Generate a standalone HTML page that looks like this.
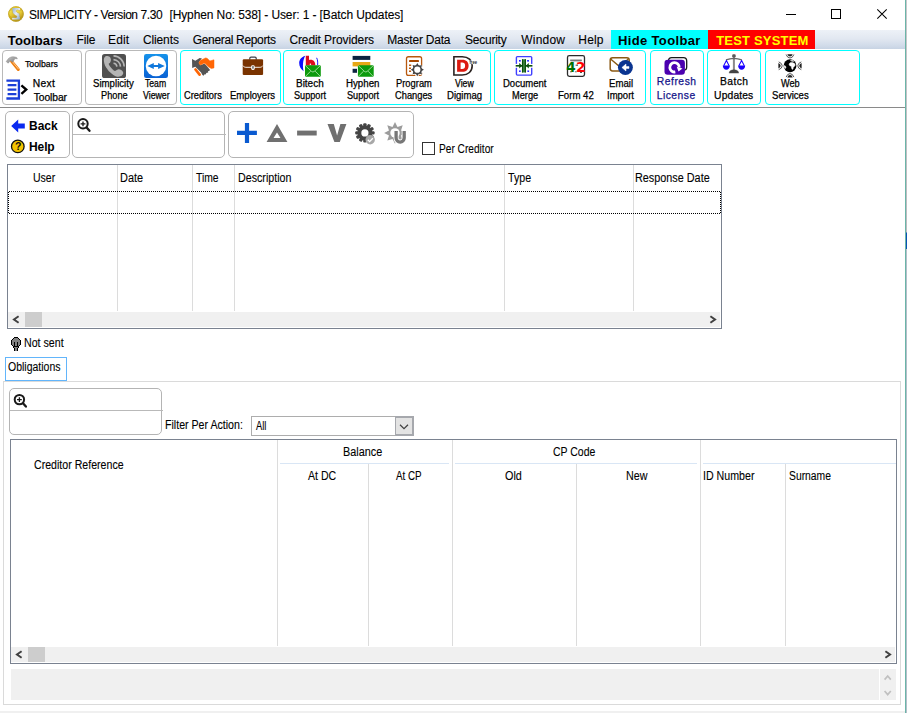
<!DOCTYPE html>
<html><head><meta charset="utf-8"><title>SIMPLICITY</title>
<style>
*{box-sizing:border-box;margin:0;padding:0}
html,body{width:907px;height:713px;overflow:hidden;background:#fff}
body{position:relative;font-family:"Liberation Sans",sans-serif;font-size:11px;color:#000}
.a,.t,svg{position:absolute}
.t{white-space:nowrap;line-height:normal;transform-origin:0 0;-webkit-text-stroke:.25px currentColor}
.b{font-weight:bold;-webkit-text-stroke:0}
.n{-webkit-text-stroke:.1px currentColor}
.g{position:absolute;top:50px;height:55px;border:1px solid #b9b9b9;border-radius:4px}
.g.c{border-color:#00ffff}
.r{position:absolute;border:1px solid #b4b4b4;border-radius:5px}
.grid{position:absolute;border:1px solid #7a8290;background:#fff}
.v{position:absolute;width:1px;background:#dcdcdc}
.h{position:absolute;height:1px;background:#d9e6f5}
.sb{position:absolute;background:#f0f0f0}
.th{position:absolute;background:#cdcdcd}
</style></head><body>

<svg style="left:4px;top:2px" width="24" height="24" viewBox="4 2 24 24">
 <defs>
  <radialGradient id="tg" cx="40%" cy="35%" r="70%"><stop offset="0" stop-color="#f6e650"/><stop offset=".6" stop-color="#d9b824"/><stop offset="1" stop-color="#a08418"/></radialGradient>
  <linearGradient id="ts" x1="0" y1="0" x2="1" y2="1"><stop offset="0" stop-color="#8fabcd"/><stop offset=".5" stop-color="#e6edf5"/><stop offset="1" stop-color="#85a3c7"/></linearGradient>
  <linearGradient id="ta" x1="0" y1="0" x2="1" y2="1"><stop offset="0" stop-color="#f8ec5a"/><stop offset=".55" stop-color="#e2c432"/><stop offset="1" stop-color="#b08c18"/></linearGradient>
 </defs>
 <circle cx="15.950" cy="13.950" r="7.700" fill="url(#tg)"/>
 <path d="M12.42 8.06 20.16 8.06 20.16 12.10 19.82 19.51 12.08 19.51 12.08 16.81 12.42 12.10Z" fill="url(#ts)"/>
 <path d="M9.05 11.09 11.91 9.58 12.59 12.77 14.10 14.46 16.96 16.31 16.29 17.82 12.08 17.66 9.89 16.14 8.71 13.78Z" fill="url(#ta)" stroke="#b5941e" stroke-width=".35"/>
 <path d="M15.95 10.92 17.47 9.91 19.82 10.59 21.51 9.74 23.02 12.10 22.86 15.47 20.84 17.82 19.82 16.81 19.66 13.78 16.96 12.27Z" fill="url(#ta)" stroke="#b5941e" stroke-width=".35"/>
 <circle cx="15.950" cy="13.950" r="7.300" fill="none" stroke="#c8a822" stroke-width=".9" opacity=".7"/>
</svg>

<div class="t n" style="left:29.06px;top:8px;font-size:12px;letter-spacing:-0.429px;">SIMPLICITY - Version 7.30</div>
<div class="t n" style="left:169.44px;top:8px;font-size:12px;letter-spacing:-0.111px;">[Hyphen No: 538] - User: 1 - [Batch Updates]</div>
<svg style="left:780px;top:4px" width="120" height="22" viewBox="0 0 120 22">
 <path d="M6 10.5H16" stroke="#000" stroke-width="1" fill="none"/>
 <rect x="51.5" y="5.5" width="9" height="9" stroke="#000" stroke-width="1" fill="none"/>
 <path d="M97.3 5.3L106.7 14.7M106.7 5.3L97.3 14.7" stroke="#000" stroke-width="1.05" fill="none"/>
</svg>
<div class="a" style="left:0;top:30px;width:905px;height:19px;background:linear-gradient(#edf1f7 0,#e2e8f1 45%,#d2dcea 80%,#c7d3e3 100%)"></div>
<div class="a" style="left:611px;top:30px;width:97px;height:19px;background:#00ffff"></div>
<div class="a" style="left:708px;top:30px;width:107px;height:19px;background:#ff0000"></div>
<div class="t b" style="left:7.85px;top:33px;font-size:13px;letter-spacing:0.112px;">Toolbars</div>
<div class="t n" style="left:76.62px;top:33px;font-size:12px;letter-spacing:-0.139px;">File</div>
<div class="t n" style="left:108.02px;top:33px;font-size:12px;letter-spacing:0.132px;">Edit</div>
<div class="t n" style="left:142.89px;top:33px;font-size:12px;letter-spacing:-0.106px;">Clients</div>
<div class="t n" style="left:192.70px;top:33px;font-size:12px;letter-spacing:-0.329px;">General Reports</div>
<div class="t n" style="left:289.39px;top:33px;font-size:12px;letter-spacing:-0.086px;">Credit Providers</div>
<div class="t n" style="left:387.32px;top:33px;font-size:12px;letter-spacing:-0.217px;">Master Data</div>
<div class="t n" style="left:464.96px;top:33px;font-size:12px;letter-spacing:-0.226px;">Security</div>
<div class="t n" style="left:521.25px;top:33px;font-size:12px;letter-spacing:0.209px;">Window</div>
<div class="t n" style="left:578.32px;top:33px;font-size:12px;letter-spacing:0.170px;">Help</div>
<div class="t b" style="left:617.93px;top:33px;font-size:13px;letter-spacing:0.365px;">Hide Toolbar</div>
<div class="t b" style="left:716.15px;top:33px;font-size:13px;letter-spacing:0.193px;color:#ffff00;">TEST SYSTEM</div>
<div class="g" style="left:2px;width:80px"></div>
<div class="g" style="left:85px;width:92px"></div>
<div class="g c" style="left:180px;width:101px"></div>
<div class="g c" style="left:283px;width:208px"></div>
<div class="g c" style="left:494px;width:152px"></div>
<div class="g c" style="left:650px;width:54px"></div>
<div class="g c" style="left:707px;width:54px"></div>
<div class="g c" style="left:765px;width:95px"></div>
<svg style="left:0;top:50px" width="905" height="56" viewBox="0 50 905 56">
 <defs>
  <linearGradient id="tv" x1="0" y1="0" x2="0" y2="1"><stop offset="0" stop-color="#1692ea"/><stop offset="1" stop-color="#0a62d4"/></linearGradient>
  <linearGradient id="hm" x1="0" y1="0" x2="1" y2="1"><stop offset="0" stop-color="#cfcfcf"/><stop offset="1" stop-color="#6e6e6e"/></linearGradient>
  <g id="env"><rect x="0" y="0" width="15.8" height="11.6" rx="1.2" fill="#0c9a0c"/><path d="M0.500 0.500L6.700 6.300Q7.900 7.300 9.100 6.300L15.300 0.500M0.600 11.100L5.600 6M15.200 11.100L10.200 6" fill="none" stroke="#c4ecbc" stroke-width=".75"/></g>
 </defs>
 <!-- hammer -->
 <path d="M11.600 61.400L18.300 69.500" stroke="#ee7f12" stroke-width="3" stroke-linecap="round"/>
 <path d="M12.200 61.400L18.300 68.800" stroke="#ffc98a" stroke-width="1" stroke-linecap="round"/>
 <path d="M6.2 61.6L8.4 58.6C10.4 56.6 13.6 56.2 16.6 57.4L17.4 58.8L15 58.6L12.6 62.2L10.4 60.6L8.2 63.2Z" fill="url(#hm)" stroke="#7a7a7a" stroke-width=".4"/>
 <!-- next toolbar -->
 <path d="M6.4 80.7H18.9V98.5H6.4" fill="none" stroke="#1a3fd8" stroke-width="2.3"/>
 <path d="M7.6 85.2H16.4M7.6 89.7H16.4M7.6 94.1H16.4" stroke="#1a3fd8" stroke-width="2.2"/>
 <path d="M21.4 85.4L26.200 89.600L21.4 93.800" fill="none" stroke="#000" stroke-width="2.4"/>
 <!-- phone -->
 <rect x="102" y="54" width="24" height="24" rx="2.600" fill="#505050"/>
 <path d="M106.68 56.12C107.52 56.16 109.11 56.48 109.82 57.11C110.53 57.73 110.87 58.94 110.92 59.86C110.97 60.77 110.50 61.95 110.13 62.60C109.77 63.26 108.84 63.29 108.72 63.78C108.60 64.27 108.92 64.77 109.43 65.55C109.94 66.34 110.96 67.63 111.78 68.50C112.60 69.37 113.62 70.46 114.34 70.77C115.06 71.09 115.42 70.63 116.10 70.38C116.79 70.13 117.61 69.35 118.46 69.28C119.31 69.22 120.42 69.47 121.21 69.99C122.00 70.51 122.94 71.63 123.17 72.42C123.40 73.22 123.04 74.13 122.58 74.78C122.13 75.44 121.31 76.04 120.42 76.35C119.54 76.67 118.39 76.85 117.28 76.67C116.17 76.48 114.99 76.01 113.75 75.25C112.50 74.49 111.06 73.37 109.82 72.11C108.58 70.85 107.20 69.16 106.28 67.71C105.37 66.26 104.73 64.77 104.32 63.39C103.91 62.02 103.77 60.54 103.85 59.46C103.93 58.38 104.32 57.47 104.79 56.91C105.26 56.35 105.84 56.09 106.68 56.12Z" fill="#b5b5b5"/>
 <path d="M113.50 63.20A3.7 3.7 0 0 1 116.90 66.60M113.50 59.60A7.3 7.3 0 0 1 120.50 66.60M113.50 55.90A11 11 0 0 1 124.20 66.60" fill="none" stroke="#b5b5b5" stroke-width="1.600"/>
 <!-- teamviewer -->
 <rect x="144" y="54" width="24" height="24" rx="2.200" fill="url(#tv)"/>
 <circle cx="156" cy="66" r="10.250" fill="#fff"/>
 <path d="M147.300 66l6.500-3v1.950h4.300v-1.950l6.700 3l-6.700 3v-1.950h-4.300v1.950z" fill="#0f78dc"/>
 <!-- handshake -->
 <path d="M192.0 59.1 195.3 60.7 199.7 58.0 202.0 58.4 200.0 60.6 198.8 62.7 200.4 65.3 204.0 63.8 205.5 64.6 209.9 69.7 209.3 71.0 208.1 71.1 208.2 72.6 206.2 73.0 206.0 74.2 204.2 74.4 203.7 75.7 202.4 75.0 201.1 72.6 195.3 66.8 192.2 67.9Z" fill="#555"/>
 <path d="M198.9 62.6 200.2 60.6 205.5 57.9 207.1 58.3 209.9 60.9 214.0 59.8 214.0 67.9 211.3 68.5 208.4 66.8 205.1 63.6 203.7 63.3 200.8 64.9 199.4 64.3Z" fill="#ff6605" stroke="#ff6605" stroke-width=".5" stroke-linejoin="round"/>
 <path d="M195.5 69.5L199.6 74.6" stroke="#ff6605" stroke-width="2.700" stroke-linecap="round"/>
 <!-- briefcase -->
 <path d="M249.800 59.800v-1.500c0-.8.500-1.200 1.200-1.200h4c.7 0 1.200.4 1.200 1.200v1.500" fill="none" stroke="#3a3f4a" stroke-width="1.200"/>
 <rect x="242.700" y="59.300" width="20.400" height="15.700" rx="1.100" fill="#7a3300"/>
 <path d="M242.700 65.500c1 1.300 2 1.800 3.200 1.800h14c1.200 0 2.200-.5 3.200-1.800" fill="none" stroke="#fff" stroke-width=".9"/>
 <rect x="251.200" y="65.200" width="3.500" height="4.700" rx="1.300" fill="#fff"/>
 <rect x="252.100" y="66.100" width="1.700" height="2.700" rx=".5" fill="#777"/>
 <!-- bitech -->
 <path d="M305.200 55.800C301.500 57 299.200 59.800 299.200 63c0 3.300 1.700 6.300 4.400 8.300c-.5-2.300-.8-4.600-.6-7.500c.2-3.200 1-5.700 2.200-8z" fill="#0a0aff"/>
 <path d="M316.600 57.800c1 1.700 1.300 4.400 1 7.200" fill="none" stroke="#1a1aff" stroke-width="1"/>
 <path d="M305.800 55.800h3.200v4.200c.6-.2 1.200-.3 1.800-.3c2.700 0 4.500 2.200 4.500 5.100v.6h-9.500z" fill="#dc0a1e"/>
 <circle cx="310.400" cy="64.200" r=".8" fill="#fff"/>
 <use href="#env" x="305" y="65.200"/>
 <!-- hyphen -->
 <rect x="352.600" y="55.900" width="17.700" height="4" fill="#0c2340"/>
 <rect x="352.600" y="62" width="17.700" height="4.400" fill="#e6a817"/>
 <rect x="352.600" y="68.800" width="4.400" height="4" fill="#0c2340"/>
 <use href="#env" x="357.900" y="65.200"/>
 <!-- program changes -->
 <rect x="406.500" y="56.750" width="15.100" height="18.600" rx="1.900" fill="#fff" stroke="#b8590f" stroke-width="1.300"/>
 <rect x="409" y="60" width="10" height="2" rx=".4" fill="#a84800"/>
 <path d="M409 65.300h2.200M409 68.300h2.200M409 71.200h2.200" stroke="#b8590f" stroke-width="1.400"/>
 <g transform="translate(417.300 69.700)">
  <circle r="6.300" fill="#fff"/>
  <polygon points="0.00,-6.60 1.61,-3.88 4.67,-4.67 3.88,-1.61 6.60,0.00 3.88,1.61 4.67,4.67 1.61,3.88 0.00,6.60 -1.61,3.88 -4.67,4.67 -3.88,1.61 -6.60,0.00 -3.88,-1.61 -4.67,-4.67 -1.61,-3.88" fill="#454545"/>
  <circle r="4.600" fill="#454545"/><circle r="3.100" fill="#fff"/>
 </g>
 <path d="M413.600 75.300h1.600M418.800 75.300h1.600" stroke="#b8590f" stroke-width="1.200"/>
 <!-- digimag -->
 <path d="M453.900 56.700h8.400c6 0 9.900 3.600 9.900 9.100c0 5.600-4 9.200-10 9.200h-8.300z" fill="#fff" stroke="#2a2220" stroke-width="1.600"/>
 <path d="M457.100 59.850h5.300c3.900 0 6.200 2.200 6.200 5.900c0 3.800-2.400 6.050-6.300 6.050h-5.200zM460.600 62.600v6.500h1.500c2 0 3-1.100 3-3.250c0-2.150-1-3.250-3-3.250z" fill="#dc1a10" fill-rule="evenodd"/>
 <rect x="469.400" y="60.300" width="8" height="3.900" fill="#fff"/>
 <text x="469.400" y="64" font-family="Liberation Sans,sans-serif" font-size="5" font-weight="bold" fill="#2a2a2a" textLength="7.600" lengthAdjust="spacingAndGlyphs">free</text>
 <!-- document merge -->
 <rect x="516.400" y="56.600" width="15.300" height="18.500" rx="1" fill="#fff" stroke="#4040ff" stroke-width="1.400"/>
 <rect x="515" y="63.900" width="18.200" height="3.900" fill="#fff"/>
 <rect x="519" y="60" width="1.700" height="1.600" fill="#1a1aff"/><rect x="527.200" y="60" width="1.700" height="1.600" fill="#1a1aff"/>
 <rect x="519" y="70.400" width="1.700" height="1.600" fill="#2a2aff"/><rect x="527.400" y="70.400" width="1.700" height="1.600" fill="#2a2aff"/>
 <path d="M515.700 65.800h16.700" stroke="#0b4f0b" stroke-width="1.600"/>
 <path d="M519.200 63l3 2.800l-3 2.800zM528.800 63l-3 2.800l3 2.800z" fill="#0b4f0b"/>
 <rect x="522" y="59.300" width="3.900" height="13.100" fill="#4c8a4c"/>
 <path d="M522.600 59.300v13.100M525.300 59.300v13.100" stroke="#0b4f0b" stroke-width="1.300"/>
 <!-- form 42 -->
 <rect x="567.500" y="55.700" width="17" height="20.600" rx="1.800" fill="#fff" stroke="#2b2b2b" stroke-width="1.300"/>
 <path d="M570.200 60.200h11.600" stroke="#333" stroke-width="1"/>
 <path d="M570.600 61.300h10.800" stroke="#aaa" stroke-width=".8"/>
 <path d="M575.600 65.200h2.400M570.200 71.800h1.400M575.200 71.800h1.400M580 72.400h2" stroke="#444" stroke-width="1"/>
 <text x="566.200" y="72" font-family="DejaVu Sans,sans-serif" font-size="13.600" font-weight="bold" fill="#007000">4</text>
 <text x="576" y="72" font-family="DejaVu Sans,sans-serif" font-size="13.600" font-weight="bold" fill="#ff0000">2</text>
 <!-- email import -->
 <rect x="610.200" y="57.800" width="19" height="13.100" rx="2.400" fill="#fff" stroke="#8a5a14" stroke-width="1.500"/>
 <path d="M610.900 59.200l8.600 7.300l8.600-7.300" fill="none" stroke="#8a5a14" stroke-width="1.400"/>
 <circle cx="625.400" cy="67.500" r="7.450" fill="#0a3490"/>
 <path d="M621.900 67.500l4.100-3.500v2.600h3v1.800h-3v2.600z" fill="#fff" stroke="#fff" stroke-width=".5" stroke-linejoin="round"/>
 <!-- refresh -->
 <rect x="668.500" y="57.700" width="18.200" height="12.600" rx="3.200" fill="#fff" stroke="#1a1a1a" stroke-width="1.300"/>
 <rect x="664.500" y="59.700" width="20.400" height="15" rx="3.200" fill="#4b00b0"/>
 <path d="M675.300 71.950A4.700 4.700 0 1 1 679.200 67.500" fill="none" stroke="#fff" stroke-width="2.800"/>
 <path d="M676.700 66.800l5.800 1.600l-4 3z" fill="#fff"/>
 <!-- scales -->
 <rect x="732.900" y="56" width="2" height="14.500" fill="#8a8a8a"/>
 <rect x="732.200" y="54.300" width="3.500" height="3.200" rx="1.200" fill="#5a5a5a"/>
 <path d="M726 59.900Q730 58.400 733.900 58.300Q737.800 58.400 741.800 59.900" fill="none" stroke="#666" stroke-width="1.200"/>
 <path d="M729.100 73.100c.3-2.200 2-3.300 4.800-3.300s4.500 1.100 4.800 3.300z" fill="#444" stroke="#444" stroke-width=".4"/>
 <path d="M723.700 65.700l2.700-5.300l2.700 5.300M738.900 65.700l2.700-5.300l2.700 5.300" fill="none" stroke="#1a00ff" stroke-width="1.050" stroke-linejoin="round"/>
 <path d="M722.800 65.500h7.100c0 2.600-1.500 4.300-3.550 4.300s-3.550-1.700-3.550-4.300zM738.100 65.500h7.100c0 2.600-1.500 4.300-3.550 4.300s-3.550-1.700-3.550-4.300z" fill="#1a00ff"/>
 <!-- web services -->
 <circle cx="790" cy="65.750" r="6.400" fill="#000"/>
 <path d="M789.3 63.6 790.6 62.4 792.7 62.6 794.6 63.4 795.3 65.1 794.4 66.5 793.3 67.2 793.1 68.9 792.2 69.5 791.5 68.0 791.2 66.2 789.8 65.8 789.1 64.7ZM790.4 60.5 792.7 60.3 793.9 61.5 791.8 61.3ZM784.0 65.5 785.5 66.1 786.0 67.6 785.1 68.7 784.3 67.6Z" fill="#fff" stroke="#fff" stroke-width=".4" stroke-linejoin="round"/>
 <defs><g id="wv"><path d="M-2.700 -11.600h5.400q-.9 2.300-2.700 2.300t-2.700-2.300z" fill="#222"/><path d="M-3.900 -11.300q1.300 3.500 3.900 3.500t3.900-3.500" fill="none" stroke="#444" stroke-width=".9"/></g></defs>
 <g transform="translate(790 65.800)"><use href="#wv"/><use href="#wv" transform="rotate(90)"/><use href="#wv" transform="rotate(180)"/><use href="#wv" transform="rotate(270)"/></g>
</svg>

<div class="t" style="left:25.10px;top:58px;font-size:9.8px;transform:scaleX(0.8894);">Toolbars</div>
<div class="t" style="left:32.86px;top:78px;font-size:10.3px;letter-spacing:0.281px;">Next</div>
<div class="t" style="left:33.77px;top:92px;font-size:10.3px;letter-spacing:-0.087px;">Toolbar</div>
<div class="t" style="left:92.76px;top:78px;font-size:10px;transform:scaleX(0.9652);">Simplicity</div>
<div class="t" style="left:100.74px;top:90px;font-size:10px;transform:scaleX(0.9222);">Phone</div>
<div class="t" style="left:144.61px;top:78px;font-size:10px;transform:scaleX(0.8631);">Team</div>
<div class="t" style="left:143.16px;top:90px;font-size:10px;transform:scaleX(0.8763);">Viewer</div>
<div class="t" style="left:183.73px;top:90px;font-size:10px;transform:scaleX(0.9321);">Creditors</div>
<div class="t" style="left:229.72px;top:90px;font-size:10px;transform:scaleX(0.9554);">Employers</div>
<div class="t" style="left:296.18px;top:78px;font-size:10px;transform:scaleX(0.9953);">Bitech</div>
<div class="t" style="left:294.19px;top:90px;font-size:10px;transform:scaleX(0.9131);">Support</div>
<div class="t" style="left:345.90px;top:78px;font-size:10px;transform:scaleX(0.9698);">Hyphen</div>
<div class="t" style="left:346.98px;top:90px;font-size:10px;transform:scaleX(0.9160);">Support</div>
<div class="t" style="left:395.63px;top:78px;font-size:10px;transform:scaleX(0.9358);">Program</div>
<div class="t" style="left:394.93px;top:90px;font-size:10px;transform:scaleX(0.9295);">Changes</div>
<div class="t" style="left:455.06px;top:78px;font-size:10px;transform:scaleX(0.8728);">View</div>
<div class="t" style="left:447.31px;top:90px;font-size:10px;transform:scaleX(0.9570);">Digimag</div>
<div class="t" style="left:503.02px;top:78px;font-size:10px;transform:scaleX(0.9512);">Document</div>
<div class="t" style="left:511.54px;top:90px;font-size:10px;transform:scaleX(0.9232);">Merge</div>
<div class="t" style="left:557.81px;top:90px;font-size:10px;transform:scaleX(0.9608);">Form 42</div>
<div class="t" style="left:608.51px;top:78px;font-size:10px;transform:scaleX(0.9611);">Email</div>
<div class="t" style="left:606.72px;top:90px;font-size:10px;transform:scaleX(0.9509);">Import</div>
<div class="t" style="left:781.26px;top:78px;font-size:10px;transform:scaleX(0.9155);">Web</div>
<div class="t" style="left:772.37px;top:90px;font-size:10px;transform:scaleX(0.9566);">Services</div>
<div class="t" style="left:656.76px;top:76px;font-size:10.3px;letter-spacing:0.541px;color:#15158a;">Refresh</div>
<div class="t" style="left:656.76px;top:90px;font-size:10.3px;letter-spacing:0.483px;color:#15158a;">License</div>
<div class="t" style="left:720.06px;top:76px;font-size:10.3px;letter-spacing:0.419px;">Batch</div>
<div class="t" style="left:714.11px;top:90px;font-size:10.3px;letter-spacing:0.134px;">Updates</div>
<div class="a" style="left:0;top:107px;width:905px;height:1px;background:#8a8a8a"></div>
<div class="r" style="left:5px;top:111px;width:65px;height:47px"></div>
<div class="r" style="left:72px;top:111px;width:153px;height:47px"></div>
<div class="a" style="left:73px;top:134px;width:153px;height:1px;background:#b9b9b9"></div>
<div class="r" style="left:228px;top:111px;width:186px;height:47px"></div>
<svg style="left:0;top:110px" width="500" height="50" viewBox="0 110 500 50">
 <!-- back arrow -->
 <path d="M11.200 126l7-6.500v3.900h6.600v5.200h-6.600v3.900z" fill="#0a2af0"/>
 <!-- help -->
 <circle cx="17.800" cy="146.400" r="6.300" fill="#f5c400" stroke="#111" stroke-width="1.300"/>
 <text x="14.900" y="150.200" font-family="Liberation Sans,sans-serif" font-size="10.500" font-weight="bold" fill="#111">?</text>
 <!-- magnifier -->
 <circle cx="83" cy="123.800" r="4.700" fill="#fff" stroke="#1a1a1a" stroke-width="2"/>
 <path d="M80.600 123.800h4.800M83 121.400v4.800" stroke="#1a1a1a" stroke-width="1.300"/>
 <path d="M86.800 127.700l2.700 3.100" stroke="#1a1a1a" stroke-width="2.300" stroke-linecap="round"/>
 <!-- plus -->
 <path d="M247 123v19.900M237 132.950h19.900" stroke="#0a5ad0" stroke-width="4.200"/>
 <!-- triangle -->
 <path d="M277 124L287.400 141.900H266.600ZM277 132.400L273.500 137.900H280.500Z" fill="#707070" fill-rule="evenodd"/>
 <!-- minus -->
 <rect x="297.100" y="130.600" width="19.600" height="4.900" fill="#707070"/>
 <!-- V -->
 <path d="M327.500 124h6.300l3.300 11.400l3.300-11.400h6l-6.600 18h-5.400z" fill="#707070"/>
 <!-- gear1 -->
 <g transform="translate(364.900 132.900)">
  <g fill="#444"><rect x="-1.700" y="-9.700" width="3.400" height="19.400" rx="1.100" transform="rotate(0)"/><rect x="-1.700" y="-9.700" width="3.400" height="19.400" rx="1.100" transform="rotate(30)"/><rect x="-1.700" y="-9.700" width="3.400" height="19.400" rx="1.100" transform="rotate(60)"/><rect x="-1.700" y="-9.700" width="3.400" height="19.400" rx="1.100" transform="rotate(90)"/><rect x="-1.700" y="-9.700" width="3.400" height="19.400" rx="1.100" transform="rotate(120)"/><rect x="-1.700" y="-9.700" width="3.400" height="19.400" rx="1.100" transform="rotate(150)"/></g>
  <circle r="7.400" fill="#444"/><circle r="3.600" fill="#fff"/>
 </g>
 <circle cx="370.200" cy="139.800" r="4.700" fill="#a8a8a8"/>
 <path d="M367.800 139.800l1.800 1.800l3.200-3.400" fill="none" stroke="#fff" stroke-width="1.300"/>
 <!-- gear2 -->
 <g transform="translate(395 132.900)">
  <polygon points="0.00,-10.90 2.49,-6.01 7.71,-7.71 6.01,-2.49 10.90,0.00 6.01,2.49 7.71,7.71 2.49,6.01 0.00,10.90 -2.49,6.01 -7.71,7.71 -6.01,2.49 -10.90,0.00 -6.01,-2.49 -7.71,-7.71 -2.49,-6.01" fill="#9c9c9c"/>
  <circle r="4.700" fill="#fff"/>
 </g>
 <path d="M396.100 130.900v7.100a4.050 4.050 0 0 0 8.100 0v-7.100" fill="none" stroke="#fff" stroke-width="5"/>
 <path d="M396.100 131v7a4.050 4.050 0 0 0 8.100 0v-7" fill="none" stroke="#777" stroke-width="3.300"/>
</svg>

<div class="t b" style="left:29.00px;top:119px;font-size:12px;letter-spacing:-0.032px;">Back</div>
<div class="t b" style="left:29.00px;top:140px;font-size:12px;letter-spacing:-0.103px;">Help</div>
<div class="a" style="left:422px;top:142px;width:13px;height:13px;border:1px solid #333;background:#fff"></div>
<div class="t n" style="left:438.67px;top:142px;font-size:12px;transform:scaleX(0.8456);">Per Creditor</div>
<div class="grid" style="left:7px;top:164px;width:715px;height:165px"></div>
<div class="v" style="left:117px;top:165px;height:146px"></div>
<div class="v" style="left:192px;top:165px;height:146px"></div>
<div class="v" style="left:234px;top:165px;height:146px"></div>
<div class="v" style="left:504px;top:165px;height:146px"></div>
<div class="v" style="left:633px;top:165px;height:146px"></div>
<div class="a" style="left:9px;top:191px;width:712px;height:1px;background:repeating-linear-gradient(90deg,#000 0 1px,transparent 1px 2px)"></div>
<div class="a" style="left:9px;top:213px;width:712px;height:1px;background:repeating-linear-gradient(90deg,#000 0 1px,transparent 1px 2px)"></div>
<div class="a" style="left:8px;top:192px;width:1px;height:21px;background:repeating-linear-gradient(180deg,#000 0 1px,transparent 1px 2px)"></div>
<div class="a" style="left:720px;top:192px;width:1px;height:21px;background:repeating-linear-gradient(180deg,#000 0 1px,transparent 1px 2px)"></div>
<div class="t n" style="left:32.79px;top:171px;font-size:12px;transform:scaleX(0.8756);">User</div>
<div class="t n" style="left:120.30px;top:171px;font-size:12px;transform:scaleX(0.9106);">Date</div>
<div class="t n" style="left:196.07px;top:171px;font-size:12px;transform:scaleX(0.8622);">Time</div>
<div class="t n" style="left:237.62px;top:171px;font-size:12px;transform:scaleX(0.8908);">Description</div>
<div class="t n" style="left:508.26px;top:171px;font-size:12px;transform:scaleX(0.8889);">Type</div>
<div class="t n" style="left:635.41px;top:171px;font-size:12px;transform:scaleX(0.9027);">Response Date</div>
<div class="sb" style="left:8px;top:312px;width:712px;height:15px"></div>
<div class="th" style="left:25px;top:312px;width:17px;height:15px"></div>
<svg style="left:8px;top:312px" width="713" height="15" viewBox="8 312 713 15"><path d="M18.600 316.300L14 319.500L18.600 322.700M710.400 316.300L715 319.500L710.400 322.700" fill="none" stroke="#404040" stroke-width="2"/></svg>
<div class="t n" style="left:23.63px;top:336px;font-size:12px;transform:scaleX(0.8873);">Not sent</div>
<svg style="left:11px;top:337px" width="10" height="14" viewBox="11 337 10 14" shape-rendering="crispEdges"><rect x="14" y="337" width="4" height="1" fill="#000"/><rect x="13" y="338" width="1" height="1" fill="#000"/><rect x="14" y="338" width="4" height="1" fill="#808080"/><rect x="18" y="338" width="1" height="1" fill="#000"/><rect x="12" y="339" width="1" height="1" fill="#000"/><rect x="13" y="339" width="6" height="1" fill="#808080"/><rect x="19" y="339" width="1" height="1" fill="#000"/><rect x="11" y="340" width="1" height="1" fill="#000"/><rect x="12" y="340" width="8" height="1" fill="#808080"/><rect x="20" y="340" width="1" height="1" fill="#000"/><rect x="11" y="341" width="1" height="1" fill="#000"/><rect x="12" y="341" width="8" height="1" fill="#808080"/><rect x="20" y="341" width="1" height="1" fill="#000"/><rect x="11" y="342" width="1" height="1" fill="#000"/><rect x="12" y="342" width="2" height="1" fill="#808080"/><rect x="14" y="342" width="1" height="1" fill="#000"/><rect x="15" y="342" width="2" height="1" fill="#808080"/><rect x="17" y="342" width="1" height="1" fill="#000"/><rect x="18" y="342" width="2" height="1" fill="#808080"/><rect x="20" y="342" width="1" height="1" fill="#000"/><rect x="11" y="343" width="1" height="1" fill="#000"/><rect x="12" y="343" width="2" height="1" fill="#808080"/><rect x="14" y="343" width="1" height="1" fill="#000"/><rect x="15" y="343" width="2" height="1" fill="#808080"/><rect x="17" y="343" width="1" height="1" fill="#000"/><rect x="18" y="343" width="2" height="1" fill="#808080"/><rect x="20" y="343" width="1" height="1" fill="#000"/><rect x="11" y="344" width="1" height="1" fill="#000"/><rect x="12" y="344" width="2" height="1" fill="#808080"/><rect x="14" y="344" width="1" height="1" fill="#000"/><rect x="15" y="344" width="2" height="1" fill="#808080"/><rect x="17" y="344" width="1" height="1" fill="#000"/><rect x="18" y="344" width="2" height="1" fill="#808080"/><rect x="20" y="344" width="1" height="1" fill="#000"/><rect x="12" y="345" width="1" height="1" fill="#000"/><rect x="13" y="345" width="1" height="1" fill="#808080"/><rect x="14" y="345" width="1" height="1" fill="#000"/><rect x="15" y="345" width="2" height="1" fill="#808080"/><rect x="17" y="345" width="1" height="1" fill="#000"/><rect x="18" y="345" width="1" height="1" fill="#808080"/><rect x="19" y="345" width="1" height="1" fill="#000"/><rect x="13" y="346" width="6" height="1" fill="#000"/><rect x="13" y="347" width="1" height="1" fill="#000"/><rect x="14" y="347" width="4" height="1" fill="#808080"/><rect x="18" y="347" width="1" height="1" fill="#000"/><rect x="14" y="348" width="1" height="1" fill="#000"/><rect x="15" y="348" width="2" height="1" fill="#808080"/><rect x="17" y="348" width="1" height="1" fill="#000"/><rect x="14" y="349" width="1" height="1" fill="#000"/><rect x="15" y="349" width="2" height="1" fill="#808080"/><rect x="17" y="349" width="1" height="1" fill="#000"/><rect x="14" y="350" width="1" height="1" fill="#000"/><rect x="15" y="350" width="2" height="1" fill="#808080"/><rect x="17" y="350" width="1" height="1" fill="#000"/></svg>
<div class="a" style="left:3px;top:381px;width:898px;height:324px;border:1px solid #dadada;background:#fff"></div>
<div class="a" style="left:5px;top:357px;width:62px;height:24px;border:1px solid #62b5fb;background:#fff"></div>
<div class="t n" style="left:8.10px;top:360px;font-size:12px;transform:scaleX(0.8741);">Obligations</div>
<div class="r" style="left:9px;top:388px;width:153px;height:47px"></div>
<div class="a" style="left:10px;top:410px;width:153px;height:1px;background:#b9b9b9"></div>
<svg style="left:10px;top:390px" width="30" height="20" viewBox="10 390 30 20">
 <circle cx="19.400" cy="399.600" r="4.700" fill="#fff" stroke="#1a1a1a" stroke-width="2"/>
 <path d="M17 399.600h4.800M19.400 397.200v4.800" stroke="#1a1a1a" stroke-width="1.300"/>
 <path d="M23.200 403.500l2.700 3.100" stroke="#1a1a1a" stroke-width="2.300" stroke-linecap="round"/>
</svg>
<div class="t n" style="left:164.53px;top:418px;font-size:12px;transform:scaleX(0.8844);">Filter Per Action:</div>
<div class="a" style="left:251px;top:416px;width:163px;height:20px;border:1px solid #adadad;background:#fff"></div>
<div class="a" style="left:395px;top:416px;width:19px;height:20px;border:2px solid #a6a8ad;border-left-width:1px;background:#e3e3e3"></div>
<svg style="left:395px;top:416px" width="19" height="20" viewBox="395 416 19 20"><path d="M400 424.800L404 428.700L408 424.800" fill="none" stroke="#404040" stroke-width="1.200"/></svg>
<div class="t n" style="left:255.98px;top:419px;font-size:12px;transform:scaleX(0.7754);">All</div>
<div class="grid" style="left:10px;top:439px;width:887px;height:225px"></div>
<div class="v" style="left:277px;top:440px;height:206px"></div>
<div class="v" style="left:368px;top:464px;height:182px"></div>
<div class="v" style="left:452px;top:440px;height:206px"></div>
<div class="v" style="left:576px;top:464px;height:182px"></div>
<div class="v" style="left:700px;top:440px;height:206px"></div>
<div class="v" style="left:785px;top:464px;height:182px"></div>
<div class="h" style="left:280px;top:463px;width:169px"></div>
<div class="h" style="left:455px;top:463px;width:242px"></div>
<div class="h" style="left:703px;top:463px;width:193px"></div>
<div class="t n" style="left:33.86px;top:458px;font-size:12px;transform:scaleX(0.8839);">Creditor Reference</div>
<div class="t n" style="left:343.41px;top:445px;font-size:12px;transform:scaleX(0.9057);">Balance</div>
<div class="t n" style="left:553.27px;top:445px;font-size:12px;transform:scaleX(0.8728);">CP Code</div>
<div class="t n" style="left:307.98px;top:469px;font-size:12px;transform:scaleX(0.8819);">At DC</div>
<div class="t n" style="left:395.88px;top:469px;font-size:12px;transform:scaleX(0.8180);">At CP</div>
<div class="t n" style="left:505.09px;top:469px;font-size:12px;transform:scaleX(0.9001);">Old</div>
<div class="t n" style="left:625.72px;top:469px;font-size:12px;transform:scaleX(0.8937);">New</div>
<div class="t n" style="left:703.02px;top:469px;font-size:12px;transform:scaleX(0.8870);">ID Number</div>
<div class="t n" style="left:788.83px;top:469px;font-size:12px;transform:scaleX(0.8611);">Surname</div>
<div class="sb" style="left:11px;top:647px;width:884px;height:15px"></div>
<div class="th" style="left:28px;top:647px;width:17px;height:15px"></div>
<svg style="left:11px;top:647px" width="885" height="15" viewBox="11 647 885 15"><path d="M21.600 651.300L17 654.500L21.600 657.700M885.400 651.300L890 654.500L885.400 657.700" fill="none" stroke="#404040" stroke-width="2"/></svg>
<div class="a" style="left:11px;top:669px;width:868px;height:31px;background:#f0f0f0"></div>
<div class="a" style="left:880px;top:669px;width:16px;height:31px;background:#f0f0f0"></div>
<svg style="left:880px;top:669px" width="16" height="31" viewBox="0 0 16 31"><path d="M4.600 10.600L7.700 7L10.800 10.600M4.600 22L7.700 25.600L10.800 22" fill="none" stroke="#c0c0c0" stroke-width="1.700"/></svg>
<div class="a" style="left:0;top:711px;width:905px;height:2px;background:#f0f0f0"></div>
<div class="a" style="left:905px;top:0;width:1px;height:713px;background:#6bb5a8"></div>
<div class="a" style="left:906px;top:0;width:1px;height:713px;background:linear-gradient(#c9c7cb 0,#bcbabe 232px,#0a52b4 233px,#0a52b4 249px,#b4bec9 249px,#b4bec9 100%)"></div>
</body></html>
